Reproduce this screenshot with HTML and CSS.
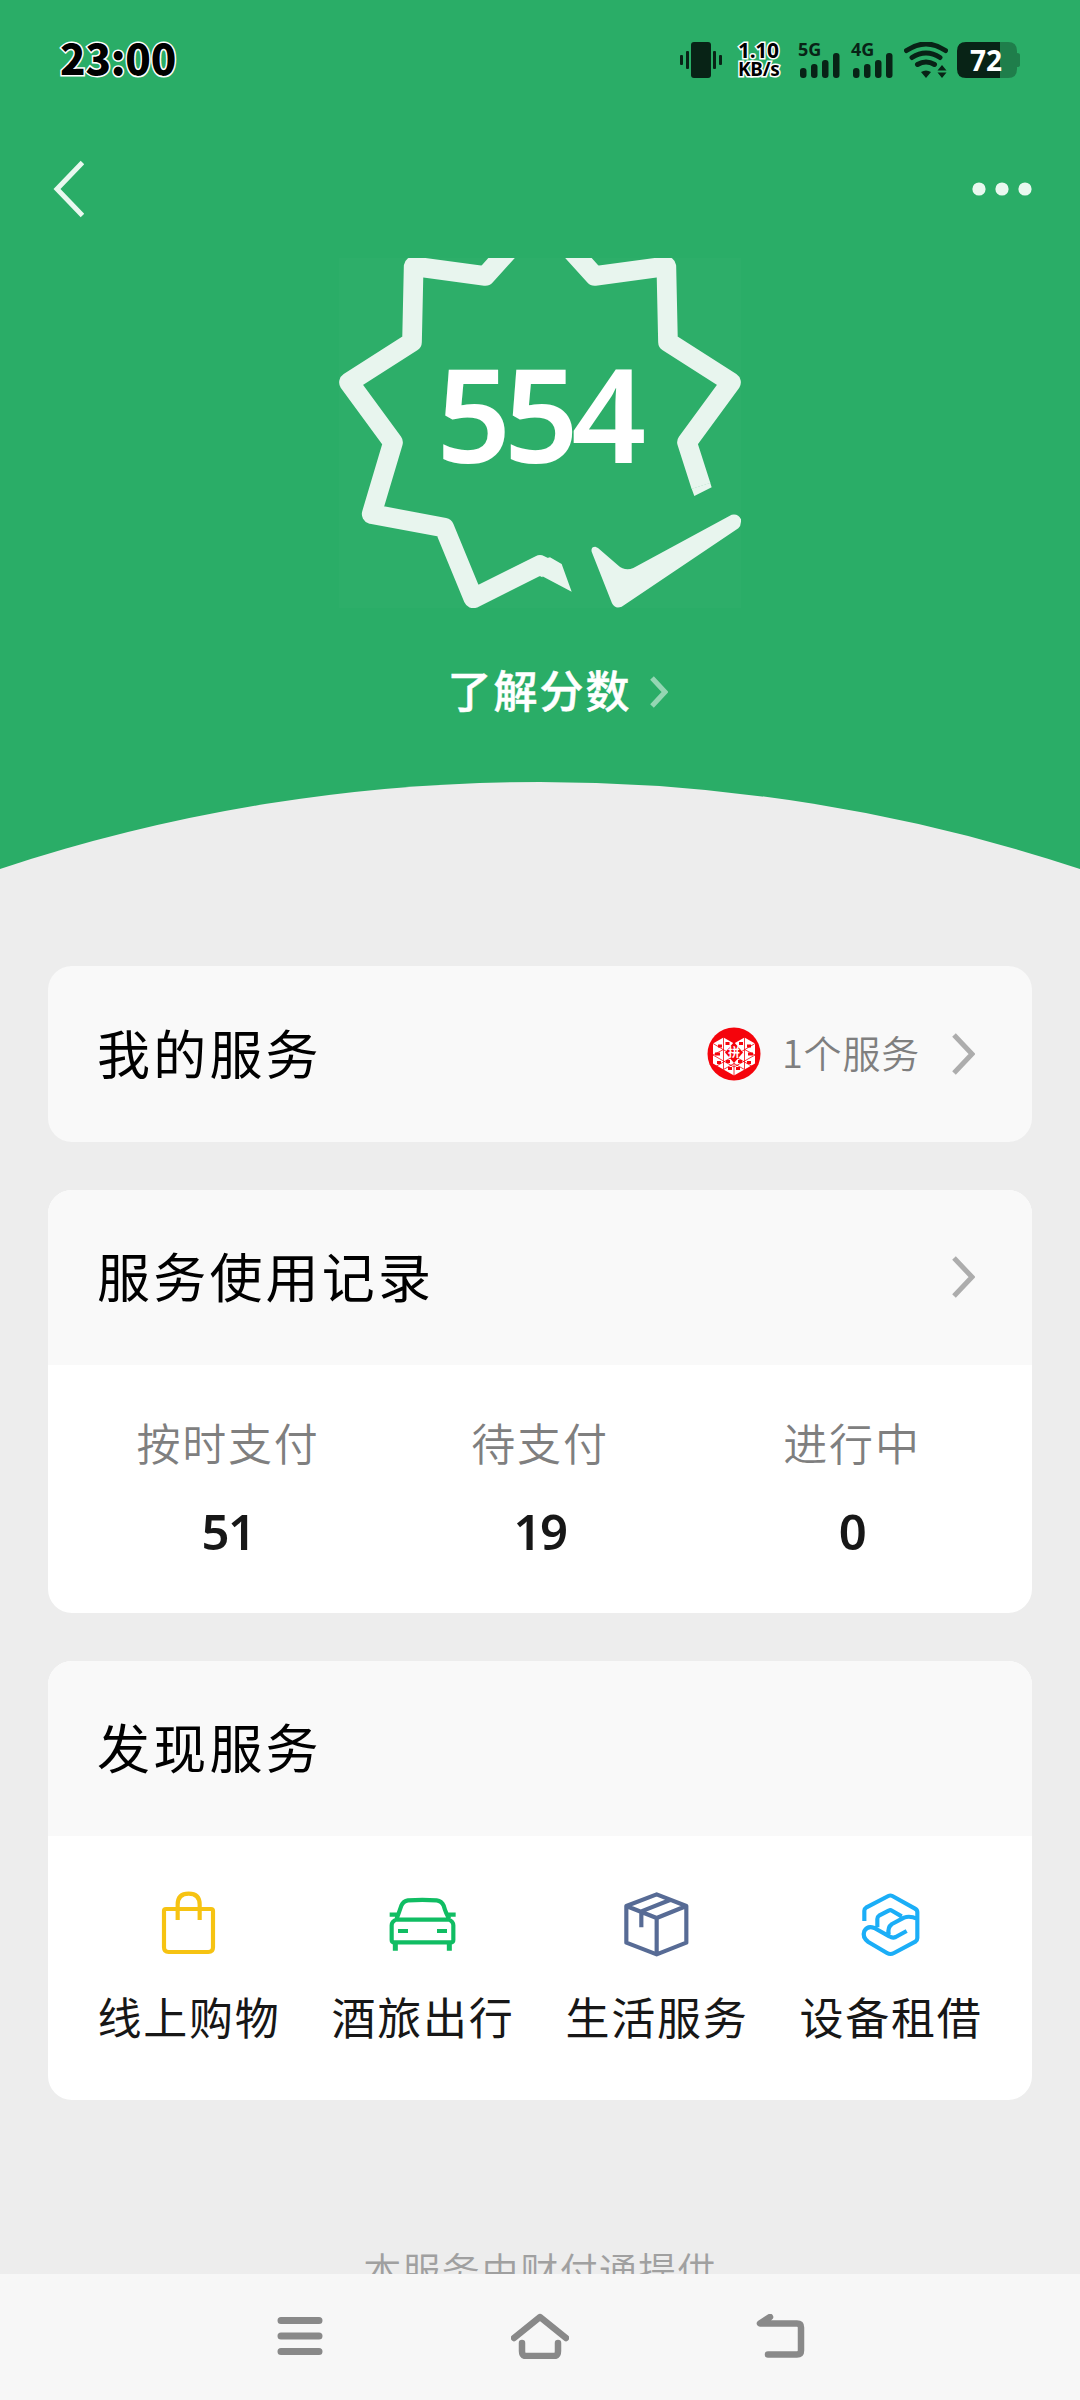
FILE: index.html
```html
<!DOCTYPE html>
<html lang="zh-CN">
<head>
<meta charset="utf-8">
<title>支付分</title>
<link rel="stylesheet" href="styles.css">
</head>
<body>
<div class="screen">
  <header class="hero">
    <div class="status-bar">
      <span class="clock">23:00</span>
      <div class="status-icons">
        <svg class="vibrate" width="42" height="36" viewBox="0 0 42 36"><rect x="11" width="20" height="36" rx="3"/><rect x="0" y="13" width="3" height="10" rx="1"/><rect x="6" y="9" width="3" height="18" rx="1"/><rect x="33" y="9" width="3" height="18" rx="1"/><rect x="39" y="13" width="3" height="10" rx="1"/></svg>
        <div class="speed"><span>1.10</span><span class="unit">KB/s</span></div>
        <div class="signal"><span>5G</span><svg width="40" height="25" viewBox="0 0 40 25"><rect y="15" width="6.5" height="10" rx="3"/><rect x="11" y="11" width="6.5" height="14" rx="3"/><rect x="22" y="7" width="6.5" height="18" rx="3"/><rect x="33" y="0" width="6.5" height="25" rx="3"/></svg></div>
        <div class="signal signal-second"><span>4G</span><svg width="40" height="25" viewBox="0 0 40 25"><rect y="15" width="6.5" height="10" rx="3"/><rect x="11" y="11" width="6.5" height="14" rx="3"/><rect x="22" y="7" width="6.5" height="18" rx="3"/><rect x="33" y="0" width="6.5" height="25" rx="3"/></svg></div>
        <svg class="wifi" width="44" height="36" viewBox="0 0 44 36"><path class="wave" d="M2.500 8.500Q22-4.500 41.500 8.500M8 15.500Q22 6.500 36 15.500M13.500 22.500Q22 17.500 30.500 22.500"/><path d="M17 30q5-3 10 0l-5 6zM38 23l4.500 5.500h-9zM38 36l4.500-5.500h-9z"/></svg>
        <div class="battery">
          <svg width="63" height="36" viewBox="0 0 63 36"><path class="battery-rest" d="M43 0h8q9 0 9 9v2q3 0 3 2v10q0 2-3 2v2q0 9-9 9h-8z"/><path d="M43 0H9Q0 0 0 9v18q0 9 9 9h34z"/></svg>
          <span class="battery-level">72</span>
        </div>
      </div>
    </div>
    <nav class="nav-bar">
      <svg width="32" height="58" viewBox="0 0 32 58"><path class="back" d="M30.500 2.500 5 29l25.500 26.500"/></svg>
      <svg width="60" height="14" viewBox="0 0 60 14"><circle cx="7" cy="7" r="6.600"/><circle cx="30" cy="7" r="6.600"/><circle cx="53" cy="7" r="6.600"/></svg>
    </nav>
    <div class="badge">
      <svg class="badge-shape" width="402" height="350" viewBox="57 54 1206 1050">
        <path class="badge-line" d="M634-45 496 108 281 79 276 306 87 427 219 607 155 822 373 863 460 1075 660 975 680 985M686-45 824 108 1039 79 1044 306 1233 427 1101 607 1143 738"/>
        <path d="M660 1005 755 1055 725 972 690 952 660 960zM1170.600 728 1175 742 1123 768 1115 746zM815 935Q812 920 826 920L834 924 893 975Q915 995 940 984L1235 824Q1255 820 1263 838 1264 857 1255 865L905 1100Q885 1108 876 1090z"/>
      </svg>
      <span class="score">554</span>
    </div>
    <div class="learn"><span>了解分数</span><svg width="18" height="32" viewBox="0 0 18 32"><path d="M2 2 15 16 2 30"/></svg></div>
    <svg class="arc" width="1080" height="89" viewBox="0 0 1080 89"><path d="M0 88A1719 1719 0 0 1 1080 88V89H0z"/></svg>
  </header>

  <main class="cards">
    <section class="card">
      <div class="card-head">
        <h2>我的服务</h2>
        <div class="my-service">
          <svg class="merchant" width="54" height="54" viewBox="0 0 54 54">
            <circle class="red" cx="27" cy="27" r="26.500"/>
            <path class="heart" d="M6 16.500 16.500 10.500 27 16.500 37.500 10.500 48 16.500V36.500L27 48.500 6 36.500z"/>
            <path class="grid" d="M16.500 10V42.500M37.500 10V42.500M27 36V49M6 16.500 27 29 48 41M48 16.500 27 29 6 41M6 28 16.500 22.500M48 28 37.500 22.500M6 28 27 40 48 28M16.500 42.500 27 36.500 37.500 42.500"/>
            <path class="red" d="M27 15 36 25.500 27 36 18 25.500zM11 17.500h4v3h-4zM18.500 15h4v3h-4zM32 15h4v3h-4zM40 17.500h4v3h-4zM8 25.500h5v3h-5zM41 25.500h5v3h-5zM10 34h4v3h-4zM19 33h4v3h-4zM31 33h4v3h-4zM40 34h4v3h-4zM21 40h4v3h-4zM29 40h4v3h-4z"/>
            <text x="27" y="30" text-anchor="middle">拼</text>
          </svg>
          <span>1个服务</span>
          <svg class="chevron" width="24" height="44" viewBox="0 0 24 44"><path d="M3 3 21 22 3 41"/></svg>
        </div>
      </div>
    </section>
    <section class="card">
      <div class="card-head">
        <h2>服务使用记录</h2>
        <svg class="chevron" width="24" height="44" viewBox="0 0 24 44"><path d="M3 3 21 22 3 41"/></svg>
      </div>
      <div class="stats">
        <div class="stat"><span>按时支付</span><b>51</b></div>
        <div class="stat"><span>待支付</span><b>19</b></div>
        <div class="stat"><span>进行中</span><b>0</b></div>
      </div>
    </section>
    <section class="card">
      <div class="card-head"><h2>发现服务</h2></div>
      <div class="services">
        <div class="service"><svg class="bag" width="72" height="72" viewBox="219 153 216 216"><path d="M258 207H393Q399 207 399 213V322Q399 336 385 336H266Q252 336 252 322V213Q252 207 258 207zM293 240V194Q293 161 326 161T359 194V240"/></svg><span>线上购物</span></div>
        <div class="service"><svg class="car" width="72" height="72" viewBox="921 153 216 216"><path d="M948 239H1108M950 238Q935 244 935 256V300Q935 307 943 307H1112Q1120 307 1120 300V256Q1120 244 1105 238M950 236Q958 215 964 197 970 183 984 181 1027 178 1070 181 1085 183 1091 197 1098 222 1108 236M929 224H952M1103 224H1127M954 273H984M1071 273H1101"/><path class="wheels" d="M946 308V332M1108 308V332"/></svg><span>酒旅出行</span></div>
        <div class="service"><svg class="box" width="72" height="72" viewBox="243 153 216 216"><path d="M350 163 439 198V308L350 343 259 308V198zM259 198 350 234 439 198M350 234V343M304 262V214L390 180"/></svg><span>生活服务</span></div>
        <div class="service"><svg class="rent" width="72" height="72" viewBox="945 153 216 216"><path d="M973 243V212Q973 206 978 203L1045 168Q1051 165 1057 168L1125 206Q1132 210 1132 216V294Q1132 301 1126 305L1062 339Q1051 345 1041 339L985 306Q966 292 973 273 983 256 1003 264L1048 289Q1058 295 1067 291L1100 273M1012 262V237Q1012 230 1017 227L1046 212Q1051 209 1056 212L1085 229M1046 283Q1042 262 1056 252L1092 233Q1110 226 1132 237"/></svg><span>设备租借</span></div>
      </div>
    </section>
  </main>
  <p class="provider">本服务由财付通提供</p>

  <footer class="system-nav">
    <svg width="46" height="38" viewBox="0 0 46 38"><path class="menu" d="M4 3.500H42M4 19H42M4 34.500H42"/></svg>
    <svg width="58" height="46" viewBox="0 0 58 46"><path d="M3 25 29 4 55 25M11 30V38Q11 43 15 43H43Q47 43 47 38V30"/></svg>
    <svg width="50" height="44" viewBox="0 0 50 44"><path d="M14 3 4 9.500H41Q45 9.500 45 13.500V36.500Q45 40.500 41 40.500H12"/></svg>
  </footer>
</div>
</body>
</html>
```
FILE: styles.css
```css
* { box-sizing: border-box; }
body { margin: 0; background: #ededed; font-family: "Noto Sans CJK SC", sans-serif; }
svg { display: block; flex: none; }
.screen { display: flex; flex-direction: column; width: 1080px; height: 2400px; overflow: hidden; color: #000; }
.hero { display: flex; flex-direction: column; height: 870px; flex: none; background: #2aad67; }
.status-bar { display: flex; justify-content: space-between; align-items: center; height: 120px; flex: none; padding: 0 60px; }
.clock { padding-bottom: 7px; font-size: 42px; font-weight: 900; letter-spacing: -0.200px; -webkit-text-stroke: 3px #fff; paint-order: stroke fill; }
.status-icons { display: flex; align-items: center; height: 36px; fill: #082316; color: #082316; font-family: "Noto Sans", sans-serif; }
.speed { display: flex; flex-direction: column; width: 45px; margin-left: 16px; margin-top: -1px; font-size: 21px; line-height: 19px; font-weight: 700; letter-spacing: -0.300px; color: #000; -webkit-text-stroke: 3px #fff; paint-order: stroke fill; }
.unit { font-size: 19px; }
.signal { position: relative; width: 44px; height: 36px; margin-left: 15px; display: flex; align-items: flex-end; padding-left: 2px; }
.signal-second { margin-left: 9px; }
.signal span { position: absolute; left: 0; top: 0; font-size: 18px; line-height: 15px; font-weight: 700; }
.wifi { margin-left: 9px; }
.wave { fill: none; stroke: #082316; stroke-width: 5; stroke-linecap: round; }
.battery { position: relative; margin-left: 9px; }
.battery-rest { fill: #1f7e4b; }
.battery-level { position: absolute; left: 0; top: 0; width: 58px; text-align: center; font-size: 28px; line-height: 36px; font-weight: 700; color: #fff; }
.nav-bar { display: flex; justify-content: space-between; align-items: center; height: 138px; flex: none; padding: 0 48px 1px 52px; fill: #e9f8ef; }
.back { fill: none; stroke: #e9f8ef; stroke-width: 5; }
.badge { position: relative; width: 402px; height: 350px; margin-left: 339px; background: #2dae69; flex: none; display: flex; align-items: center; justify-content: center; }
.badge-shape { position: absolute; left: 0; top: 0; fill: #e8f5ee; }
.badge-line { fill: none; stroke: #e8f5ee; stroke-width: 59; stroke-linejoin: round; }
.score { position: relative; font-family: "Noto Sans", sans-serif; font-size: 131px; line-height: 140px; font-weight: 600; letter-spacing: -7.500px; color: #fff; padding-bottom: 43px; margin-left: -5px; }
.learn { display: flex; align-items: center; justify-content: center; gap: 18px; height: 64px; margin: 49px 0 0 35px; color: #fff; font-size: 44px; font-weight: 500; letter-spacing: 2px; -webkit-text-stroke: 0.500px #fff; }
.learn svg { margin-top: 6px; -webkit-text-stroke: 0; }
.learn path { fill: none; stroke: #94d6b3; stroke-width: 5; }
.arc { margin-top: auto; fill: #ededed; }
.cards { display: flex; flex-direction: column; gap: 48px; padding: 96px 48px 0; }
.card { display: flex; flex-direction: column; border-radius: 24px; overflow: hidden; background: #fff; }
.card-head { display: flex; align-items: center; justify-content: space-between; height: 175.600px; padding: 0 57px 0 49px; background: #f9f9f9; }
h2 { margin: 0; padding-bottom: 4px; font-size: 53px; font-weight: 400; letter-spacing: 3.200px; }
.my-service { display: flex; align-items: center; color: #7f7f7f; font-size: 38px; font-weight: 350; letter-spacing: 0.800px; }
.my-service span { margin: 0 31px 0 21px; padding-bottom: 5px; }
.merchant { font-size: 12px; font-weight: 700; letter-spacing: 0; }
.merchant text { fill: #fff; }
.red { fill: #f5040c; }
.heart { fill: #fff; }
.grid { fill: none; stroke: #f5040c; stroke-width: 0.800; }
.chevron { fill: none; stroke: #adadad; stroke-width: 5; }
.stats { display: grid; grid-template-columns: repeat(3, 1fr); height: 247.500px; padding: 44px 24px 0; }
.stat, .service { display: flex; flex-direction: column; align-items: center; }
.stat span { font-size: 44px; line-height: 66px; font-weight: 350; letter-spacing: 1.800px; color: #7f7f7f; }
.stat b { margin-top: 23px; font-family: "Noto Sans", sans-serif; font-size: 49px; line-height: 66px; font-weight: 600; letter-spacing: -1.500px; color: #171717; }
.services { display: grid; grid-template-columns: repeat(4, 1fr); height: 264px; padding: 55px 24px 0; }
.service { font-size: 44px; line-height: 66px; letter-spacing: 1.800px; color: #171717; fill: none; stroke-width: 12.500; stroke-linejoin: round; }
.service span { margin-top: 20px; }
.bag { stroke: #f6c312; }
.car { stroke: #10bd63; }
.wheels { stroke-width: 15; }
.box { stroke: #576b95; }
.rent { stroke: #1baef7; }
.provider { margin: 131px 0 0; height: 40px; flex: 1; text-align: center; font-size: 38px; line-height: 76px; font-weight: 350; letter-spacing: 1.300px; color: #a0a0a0; overflow: hidden; }
.system-nav { display: flex; align-items: center; justify-content: space-between; height: 126px; flex: none; padding: 0 274px 3px 277px; background: #f7f7f7; fill: none; stroke: #898989; stroke-width: 6.500; stroke-linecap: round; stroke-linejoin: round; }
.menu { stroke-width: 7; }
```
